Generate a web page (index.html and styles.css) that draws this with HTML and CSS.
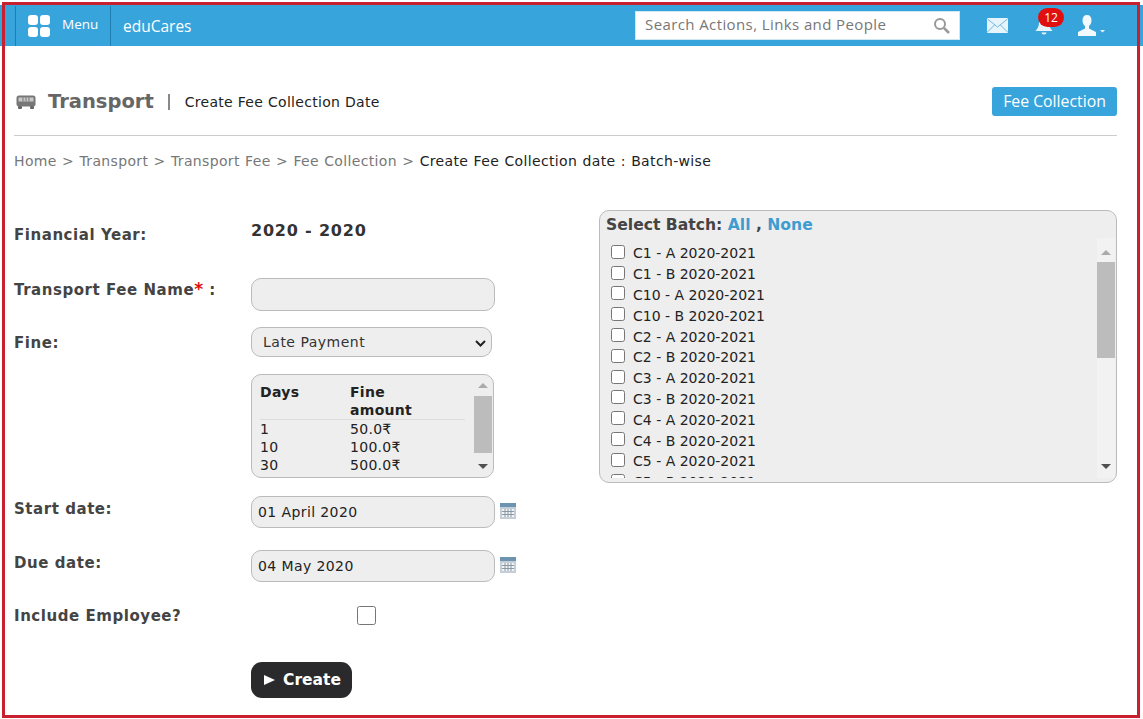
FILE: index.html
```html
<!DOCTYPE html>
<html lang="en">

<head>
    <meta charset="UTF-8">
    <meta name="viewport" content="width=device-width, initial-scale=1.0">
    <title>Create Fee Collection Date</title>
    <link rel="stylesheet" href="styles.css">
</head>

<body>
    <div class="frame"></div>

    <header class="topbar">
        <a class="menu-btn" href="#">
            <span class="menu-grid"><i></i><i></i><i></i><i></i></span>
            <span class="menu-text">Menu</span>
        </a>
        <span class="brand">eduCares</span>
        <div class="search">
            <input type="text" placeholder="Search Actions, Links and People">
            <svg class="search-icon" width="17" height="17" viewBox="0 0 17 17">
                <circle cx="7" cy="7" r="5" fill="none" stroke="#999" stroke-width="2"/>
                <path d="M11 11l5 5" stroke="#999" stroke-width="2.5"/>
            </svg>
        </div>
        <svg class="mail-icon" width="21" height="15" viewBox="0 0 21 15">
            <rect width="21" height="15" rx="1" fill="#e8f4fb"/>
            <path d="M0.5 1l10 8 10-8M0.5 14l7-7M20.5 14l-7-7" fill="none" stroke="#6fb9e0" stroke-width="1"/>
        </svg>
        <div class="bell">
            <svg width="18" height="20" viewBox="0 0 18 20">
                <path d="M9 1c-3.500 0-5 2.500-5 6 0 4-2 6-3.500 8h17C16 13 14 11 14 7c0-3.500-1.500-6-5-6z" fill="#e8f4fb"/>
                <path d="M6.500 16.500a2.500 2 0 0 0 5 0z" fill="#e8f4fb"/>
            </svg>
            <span class="badge">12</span>
        </div>
        <svg class="user-icon" width="29" height="22" viewBox="0 0 29 22">
            <path d="M10 0c-3 0-4.500 2-4.500 5.500 0 2.500 1 4.500 2.500 5.500v2.500L1 17v4h18v-4l-7-3.500V11c1.500-1 2.500-3 2.500-5.500C14.500 2 13 0 10 0z" fill="#f2f9fd"/>
            <path d="M23 15h5l-2.500 2.500z" fill="#e8f4fb"/>
        </svg>
    </header>

    <main class="page">
        <div class="title-row">
            <svg class="bus-icon" width="20" height="14" viewBox="0 0 20 14">
                <rect x="0.500" y="0.500" width="19" height="11" rx="2.500" fill="#777"/>
                <rect x="2.500" y="2.500" width="15" height="4" fill="#c8c8c8"/>
                <path d="M7 2.500v4M10 2.500v4M13 2.500v4" stroke="#777"/>
                <rect x="2" y="11" width="4" height="3" rx="1" fill="#666"/>
                <rect x="14" y="11" width="4" height="3" rx="1" fill="#666"/>
            </svg>
            <h1>Transport</h1>
            <span class="title-sep"></span>
            <span class="subtitle">Create Fee Collection Date</span>
            <a class="btn-blue" href="#">Fee Collection</a>
        </div>

        <div class="crumbs">
            <a href="#">Home</a> &gt; <a href="#">Transport</a> &gt; <a href="#">Transport Fee</a> &gt; <a href="#">Fee Collection</a> &gt; <span class="current">Create Fee Collection date : Batch-wise</span>
        </div>

        <div class="columns">
            <form class="fee-form">
                <div class="row row-year">
                    <label>Financial Year:</label>
                    <strong class="year">2020 - 2020</strong>
                </div>
                <div class="row row-name">
                    <label>Transport Fee Name<span class="req">*</span> :</label>
                    <input class="field field-name" type="text">
                </div>
                <div class="row row-fine">
                    <label>Fine:</label>
                    <select class="fine-select">
                        <option>Late Payment</option>
                    </select>
                </div>
                <div class="fine-box">
                    <table>
                        <thead>
                            <tr>
                                <th class="col-days">Days</th>
                                <th class="col-amount">Fine amount</th>
                            </tr>
                        </thead>
                        <tbody>
                            <tr>
                                <td>1</td>
                                <td>50.0₹</td>
                            </tr>
                            <tr>
                                <td>10</td>
                                <td>100.0₹</td>
                            </tr>
                            <tr>
                                <td>30</td>
                                <td>500.0₹</td>
                            </tr>
                        </tbody>
                    </table>
                    <div class="scroll scroll-fine">
                        <span class="arrow-up"></span>
                        <span class="thumb"></span>
                        <span class="arrow-down"></span>
                    </div>
                </div>
                <div class="row row-date">
                    <label>Start date:</label>
                    <input class="field" type="text" value="01 April 2020">
                    <svg class="cal" width="16" height="16" viewBox="0 0 16 16">
                        <rect width="16" height="16" fill="#c5ced6"/>
                        <rect width="16" height="4" fill="#6c94b0"/>
                        <rect x="2" y="6" width="12" height="8" fill="#f2f4f6"/>
                        <path d="M2 8.500h12M2 11.500h12M5 6v8M8 6v8M11 6v8" stroke="#8a98a4"/>
                    </svg>
                </div>
                <div class="row row-date">
                    <label>Due date:</label>
                    <input class="field" type="text" value="04 May 2020">
                    <svg class="cal" width="16" height="16" viewBox="0 0 16 16">
                        <rect width="16" height="16" fill="#c5ced6"/>
                        <rect width="16" height="4" fill="#6c94b0"/>
                        <rect x="2" y="6" width="12" height="8" fill="#f2f4f6"/>
                        <path d="M2 8.500h12M2 11.500h12M5 6v8M8 6v8M11 6v8" stroke="#8a98a4"/>
                    </svg>
                </div>
                <div class="row row-emp">
                    <label>Include Employee?</label>
                    <input class="emp-check" type="checkbox">
                </div>
                <button class="btn-create" type="button">Create</button>
            </form>

            <section class="batch">
                <div class="batch-head">Select Batch: <a href="#">All</a> , <a href="#">None</a></div>
                <div class="batch-body">
                    <ul class="batch-list">
                        <li><input type="checkbox"><span>C1 - A 2020-2021</span></li>
                        <li><input type="checkbox"><span>C1 - B 2020-2021</span></li>
                        <li><input type="checkbox"><span>C10 - A 2020-2021</span></li>
                        <li><input type="checkbox"><span>C10 - B 2020-2021</span></li>
                        <li><input type="checkbox"><span>C2 - A 2020-2021</span></li>
                        <li><input type="checkbox"><span>C2 - B 2020-2021</span></li>
                        <li><input type="checkbox"><span>C3 - A 2020-2021</span></li>
                        <li><input type="checkbox"><span>C3 - B 2020-2021</span></li>
                        <li><input type="checkbox"><span>C4 - A 2020-2021</span></li>
                        <li><input type="checkbox"><span>C4 - B 2020-2021</span></li>
                        <li><input type="checkbox"><span>C5 - A 2020-2021</span></li>
                        <li><input type="checkbox"><span>C5 - B 2020-2021</span></li>
                    </ul>
                    <div class="scroll scroll-batch">
                        <span class="arrow-up"></span>
                        <span class="thumb"></span>
                        <span class="arrow-down"></span>
                    </div>
                </div>
            </section>
        </div>
    </main>
</body>
</html>
```

FILE: styles.css
```css
* {
    padding: 0;
    margin: 0;
    box-sizing: border-box;
}

html,
body {
    height: 100%;
    overflow: hidden;
}

body {
    background: #fff;
    color: #222;
    font: 14px "DejaVu Sans", Verdana, sans-serif;
    padding-top: 5px;
}

a {
    text-decoration: none;
}

/* red outline drawn over the whole shot */
.frame {
    position: fixed;
    left: 2px;
    top: 2px;
    width: 1138px;
    height: 716px;
    border: 3px solid #c8202f;
    pointer-events: none;
    z-index: 10;
}

/* top bar */
.topbar {
    display: flex;
    align-items: center;
    height: 41px;
    background: #38a4dc;
    padding-left: 15px;
    color: #fff;
}

.menu-btn {
    display: flex;
    align-items: center;
    width: 96px;
    height: 40px;
    padding-left: 12px;
    border-left: 1px solid #1f7fb3;
    border-right: 1px solid #1f7fb3;
    color: #fff;
}

.menu-grid {
    display: grid;
    grid-template-columns: 10px 10px;
    gap: 2px;
}

.menu-grid i {
    height: 10px;
    background: #fff;
    border-radius: 3px;
}

.menu-text {
    font: 13.500px "Open Sans", sans-serif;
    margin-left: 12px;
    margin-top: -4px;
}

.brand {
    font: 15.500px "Open Sans", sans-serif;
    margin-left: 12px;
    width: 512px;
}

.search {
    display: flex;
    align-items: center;
    width: 325px;
    height: 29px;
    background: #fff;
    border: 1px solid #cfe6f3;
    padding: 0 9px;
}

.search input {
    flex: 1;
    min-width: 0;
    border: 0;
    outline: 0;
    font: 15px "Open Sans", sans-serif;
    letter-spacing: 0.4px;
    margin-top: -3px;
}

.search input::placeholder {
    color: #777;
    opacity: 1;
}

.mail-icon {
    margin-left: 27px;
}

.bell {
    position: relative;
    margin-left: 27px;
    height: 20px;
}

.badge {
    position: absolute;
    left: 3px;
    top: -8px;
    width: 26px;
    height: 19px;
    border-radius: 10px;
    background: #e01010;
    color: #fff;
    font: 12px/19px "Open Sans", sans-serif;
    text-align: center;
}

.user-icon {
    margin-left: 24px;
}

/* page */
.page {
    padding: 0 26px 0 14px;
}

.title-row {
    display: flex;
    align-items: center;
    height: 90px;
    padding: 22px 0 0 2px;
    border-bottom: 1px solid #ccc;
}

.title-row h1 {
    font-size: 19.500px;
    font-weight: bold;
    color: #666;
    margin-left: 12px;
}

.title-sep {
    width: 2px;
    height: 16px;
    background: #888;
    margin: 0 15px 0 14px;
}

.subtitle {
    font-size: 14px;
    letter-spacing: 0.3px;
}

.btn-blue {
    margin-left: auto;
    width: 125px;
    height: 29px;
    text-align: center;
    background: #38a4dc;
    color: #fff;
    border-radius: 3px;
    font: 15.800px/29px "Open Sans", sans-serif;
}

.crumbs {
    padding-top: 17px;
    color: #777;
    font-size: 14px;
    letter-spacing: 0.35px;
    word-spacing: 0.5px;
}

.crumbs a {
    color: #777;
}

.crumbs .current {
    color: #222;
}

.columns {
    display: flex;
    align-items: flex-start;
}

/* left form */
.fee-form {
    width: 585px;
}

.row {
    display: flex;
    align-items: flex-start;
}

.row label {
    width: 237px;
    flex: none;
    font-weight: bold;
    font-size: 15px;
    letter-spacing: 0.55px;
    color: #444;
}

.row-year {
    margin-top: 51px;
    height: 58px;
}

.row-year label {
    padding-top: 6px;
}

.year {
    font-size: 16px;
    letter-spacing: 0.8px;
    color: #333;
    margin-top: 1px;
}

.row-name {
    height: 49px;
}

.row-name label {
    padding-top: 3px;
}

.req {
    color: #e01010;
    font-size: 17px;
    line-height: 1;
}

.field {
    width: 244px;
    height: 32px;
    background: #eee;
    border: 1px solid #bbb;
    border-radius: 10px;
    padding: 0 6px;
    font: 14px "DejaVu Sans", sans-serif;
    letter-spacing: 0.4px;
    color: #222;
    outline: 0;
}

.field-name {
    height: 33px;
}

.row-fine {
    height: 47px;
}

.row-fine label {
    padding-top: 7px;
}

.fine-select {
    appearance: none;
    width: 241px;
    height: 30px;
    background: #eee url("data:image/svg+xml,%3Csvg xmlns='http://www.w3.org/2000/svg' width='11' height='7'%3E%3Cpath d='M1 1l4.500 4.500L10 1' fill='none' stroke='%23222' stroke-width='2'/%3E%3C/svg%3E") no-repeat 223px 12px;
    border: 1px solid #bbb;
    border-radius: 10px;
    padding: 0 11px;
    font: 14px "DejaVu Sans", sans-serif;
    letter-spacing: 0.5px;
    color: #333;
}

.fine-box {
    display: flex;
    justify-content: space-between;
    width: 243px;
    height: 104px;
    margin-left: 237px;
    margin-bottom: 18px;
    background: #eee;
    border: 1px solid #bbb;
    border-radius: 10px;
    overflow: hidden;
    padding: 8px 1px 0 8px;
}

.fine-box table {
    border-collapse: collapse;
    table-layout: fixed;
    width: 205px;
    height: 0;
    font-size: 14px;
    line-height: 18px;
    letter-spacing: 0.3px;
    color: #222;
}

.fine-box th {
    text-align: left;
    font-weight: bold;
    vertical-align: top;
    border-bottom: 1px solid #ddd;
}

.fine-box .col-days {
    width: 90px;
}

.fine-box .col-amount {
    padding-right: 40px;
}

.row-date {
    height: 54px;
}

.row-date label {
    padding-top: 4px;
}

.cal {
    margin: 7px 0 0 5px;
}

.row-emp {
    height: 58px;
}

.row-emp label {
    padding-top: 3px;
}

.emp-check {
    width: 19px;
    height: 19px;
    margin: 2px 0 0 106px;
    accent-color: #fff;
}

.btn-create {
    display: flex;
    align-items: center;
    gap: 8px;
    width: 101px;
    height: 36px;
    margin-left: 237px;
    padding-left: 13px;
    background: #2a2a2c;
    color: #fff;
    border: 0;
    border-radius: 11px;
    font: bold 15.500px "DejaVu Sans", sans-serif;
}

.btn-create::before {
    content: "";
    border-left: 11px solid #fff;
    border-top: 5.500px solid transparent;
    border-bottom: 5.500px solid transparent;
}

/* batch box */
.batch {
    width: 518px;
    height: 273px;
    margin-top: 41px;
    background: #eee;
    border: 1px solid #bbb;
    border-radius: 10px;
    overflow: hidden;
}

.batch-head {
    padding: 5px 0 0 6px;
    height: 27px;
    font-weight: bold;
    font-size: 15.600px;
    color: #444;
}

.batch-head a {
    color: #3f9ccf;
}

.batch-body {
    display: flex;
    justify-content: space-between;
    height: 244px;
    padding-bottom: 4px;
}

.batch-list {
    list-style: none;
    height: 240px;
    overflow: hidden;
    padding: 5px 0 0 11px;
}

.batch-list li {
    display: flex;
    align-items: center;
    height: 20.800px;
    font-size: 14px;
    color: #222;
}

.batch-list input {
    width: 14px;
    height: 14px;
    margin: -3px 8px 0 0;
}

/* scrollbars are plain drawings here, the boxes do not really scroll */
.scroll {
    display: flex;
    flex-direction: column;
    align-items: center;
    flex: none;
    width: 18px;
}

.scroll .thumb {
    width: 100%;
    background: #bcbcbc;
}

.arrow-up,
.arrow-down {
    flex: none;
    width: 0;
    height: 0;
    border-left: 5px solid transparent;
    border-right: 5px solid transparent;
}

.arrow-up {
    border-bottom: 5px solid #aaa;
}

.arrow-down {
    border-top: 5px solid #505050;
    margin-top: auto;
}

.scroll-fine {
    padding: 0 0 8px;
    margin-top: -1px;
}

.scroll-fine .arrow-up {
    margin-top: 1px;
    margin-bottom: 8px;
}

.scroll-fine .thumb {
    height: 57px;
}

.scroll-batch {
    padding: 12px 0 0;
    margin-right: 1px;
    background: #f2f2f2;
}

.scroll-batch .arrow-up {
    margin-bottom: 7px;
}

.scroll-batch .thumb {
    height: 96px;
}

.scroll-batch .arrow-down {
    margin-bottom: 9px;
}
```
